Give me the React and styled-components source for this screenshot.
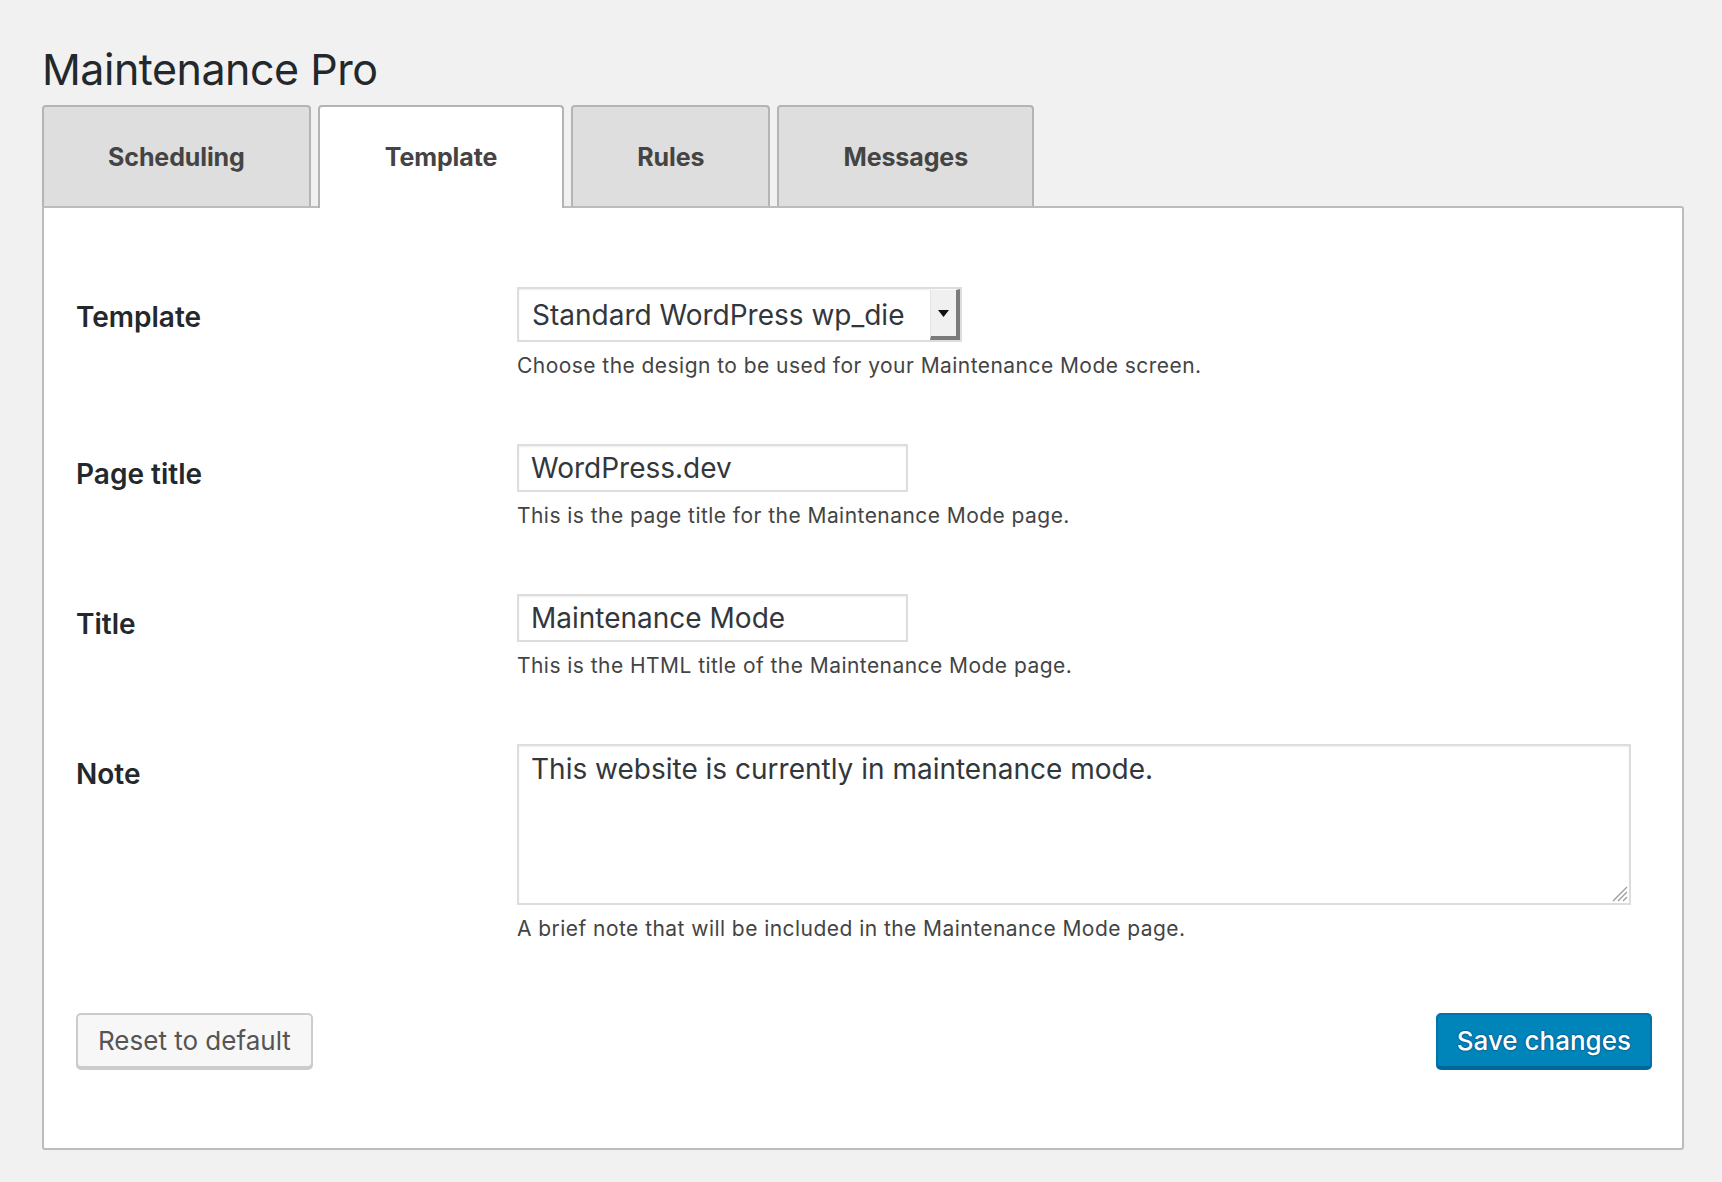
import React from "react";
import styled, { createGlobalStyle } from "styled-components";

const GlobalStyle = createGlobalStyle`
  html, body {
    margin: 0;
    padding: 0;
    background: #f1f1f1;
  }
  body {
    font-family: Inter, "Noto Sans", "Liberation Sans", Arial, sans-serif;
    color: #444;
    -webkit-font-smoothing: antialiased;
  }
  * { box-sizing: border-box; }
`;

const Page = styled.div`
  padding: 47px 38px 32px 42px;
`;

const Heading = styled.h1`
  margin: 0;
  font-size: 43px;
  line-height: 44px;
  font-weight: 400;
  color: #23282d;
  letter-spacing: -0.5px;
`;

const TabBar = styled.nav`
  display: flex;
  align-items: flex-start;
  gap: 7px;
  margin-top: 14px;
  margin-bottom: -2px;
  position: relative;
  z-index: 1;
`;

const Tab = styled.a`
  display: flex;
  align-items: center;
  justify-content: center;
  height: ${(p) => (p.$active ? "103px" : "101px")};
  padding: ${(p) => (p.$active ? "0 65px 2px" : "0 64px")};
  border: 2px solid #b4b4b4;
  border-bottom: none;
  border-radius: 4px 4px 0 0;
  background: ${(p) => (p.$active ? "#ffffff" : "#dedede")};
  color: #444;
  font-size: 25px;
  font-weight: 700;
  letter-spacing: -0.1px;
  text-decoration: none;
  cursor: pointer;
`;

const Panel = styled.section`
  background: #fff;
  border: 2px solid #bcbcbc;
  border-radius: 0 3px 3px 3px;
  padding: 79px 30px 80px 32px;
`;

const Form = styled.div`
  display: flex;
  flex-direction: column;
  gap: 64px;
  margin-bottom: 70px;
`;

const Row = styled.div`
  display: grid;
  grid-template-columns: 441px 1fr;
  align-items: start;
`;

const Label = styled.label`
  padding-top: 12px;
  font-size: 28px;
  line-height: 36px;
  font-weight: 600;
  color: #23282d;
`;

const Field = styled.div`
  display: flex;
  flex-direction: column;
  align-items: flex-start;
`;

const SelectBox = styled.div`
  display: flex;
  width: 445px;
  height: 55px;
  border: 2px solid #dddddd;
  background: #fff;
  box-shadow: inset 0 1px 2px rgba(0, 0, 0, 0.07);
`;

const SelectNative = styled.select`
  flex: 1;
  min-width: 0;
  appearance: none;
  -webkit-appearance: none;
  border: none;
  outline: none;
  background: transparent;
  padding: 0 0 0 13px;
  font-family: inherit;
  font-size: 28px;
  letter-spacing: 0;
  color: #32373c;
`;

const SelectButton = styled.span`
  display: flex;
  align-items: center;
  justify-content: center;
  width: 30px;
  background: #f0f0f0;
  border-left: 1px solid #e6e6e6;
  border-right: 4px solid #7a7a7a;
  border-bottom: 4px solid #7a7a7a;
  border-top: 1px solid #fafafa;
`;

const TextInput = styled.input`
  width: 391px;
  height: 48px;
  border: 2px solid #dddddd;
  box-shadow: inset 0 1px 2px rgba(0, 0, 0, 0.07);
  padding: 0 12px;
  font-family: inherit;
  font-size: 28px;
  letter-spacing: 0;
  color: #32373c;
  background: #fff;
  outline: none;
`;

const TextAreaWrap = styled.div`
  position: relative;
  display: block;
`;

const TextArea = styled.textarea`
  width: 1114px;
  height: 161px;
  border: 2px solid #dddddd;
  box-shadow: inset 0 1px 2px rgba(0, 0, 0, 0.07);
  padding: 5px 12px;
  font-family: inherit;
  font-size: 28px;
  line-height: 36px;
  letter-spacing: 0;
  color: #32373c;
  background: #fff;
  outline: none;
  resize: none;
  margin: 0;
  display: block;
`;

const ResizeGrip = styled.svg`
  position: absolute;
  right: 3px;
  bottom: 3px;
  pointer-events: none;
`;

const Description = styled.p`
  margin: 10px 0 0;
  font-size: 21px;
  line-height: 28px;
  letter-spacing: 0.45px;
  color: #444;
`;

const Actions = styled.div`
  display: flex;
  justify-content: space-between;
  align-items: flex-start;
`;

const Button = styled.button`
  height: 55px;
  padding: 0 ${(p) => (p.$primary ? "19px" : "20px")};
  border-radius: 5px;
  font-family: inherit;
  font-size: 26px;
  font-weight: ${(p) => (p.$primary ? 500 : 400)};
  letter-spacing: 0;
  cursor: pointer;
  border: 2px solid ${(p) => (p.$primary ? "#0073aa" : "#cccccc")};
  border-bottom-color: ${(p) => (p.$primary ? "#006799" : "#cccccc")};
  background: ${(p) => (p.$primary ? "#0085ba" : "#f7f7f7")};
  color: ${(p) => (p.$primary ? "#ffffff" : "#555555")};
  box-shadow: 0 2px 0 ${(p) => (p.$primary ? "#006799" : "#cccccc")};
  text-shadow: ${(p) =>
    p.$primary
      ? "0 -1px 1px #006799, 1px 0 1px #006799, 0 1px 1px #006799, -1px 0 1px #006799"
      : "none"};
`;

const tabs = ["Scheduling", "Template", "Rules", "Messages"];

export default function App() {
  return (
    <>
      <GlobalStyle />
      <Page>
        <Heading>Maintenance Pro</Heading>
        <TabBar>
          {tabs.map((t) => (
            <Tab key={t} $active={t === "Template"}>
              {t}
            </Tab>
          ))}
        </TabBar>
        <Panel>
          <Form>
            <Row>
              <Label>Template</Label>
              <Field>
                <SelectBox>
                  <SelectNative defaultValue="wp_die">
                    <option value="wp_die">Standard WordPress wp_die</option>
                  </SelectNative>
                  <SelectButton>
                    <svg width="11" height="7" viewBox="0 0 11 7">
                      <path d="M0 0 H11 L5.5 7 Z" fill="#111" />
                    </svg>
                  </SelectButton>
                </SelectBox>
                <Description>
                  Choose the design to be used for your Maintenance Mode screen.
                </Description>
              </Field>
            </Row>
            <Row>
              <Label>Page title</Label>
              <Field>
                <TextInput defaultValue="WordPress.dev" />
                <Description>
                  This is the page title for the Maintenance Mode page.
                </Description>
              </Field>
            </Row>
            <Row>
              <Label>Title</Label>
              <Field>
                <TextInput defaultValue="Maintenance Mode" />
                <Description>
                  This is the HTML title of the Maintenance Mode page.
                </Description>
              </Field>
            </Row>
            <Row>
              <Label>Note</Label>
              <Field>
                <TextAreaWrap>
                  <TextArea defaultValue="This website is currently in maintenance mode." />
                  <ResizeGrip width="18" height="18" viewBox="0 0 18 18">
                    <path
                      d="M17 3 L3 17 M17 8 L8 17 M17 13 L13 17"
                      stroke="#9a9a9a"
                      strokeWidth="1.3"
                      fill="none"
                    />
                  </ResizeGrip>
                </TextAreaWrap>
                <Description>
                  A brief note that will be included in the Maintenance Mode
                  page.
                </Description>
              </Field>
            </Row>
          </Form>
          <Actions>
            <Button>Reset to default</Button>
            <Button $primary>Save changes</Button>
          </Actions>
        </Panel>
      </Page>
    </>
  );
}
